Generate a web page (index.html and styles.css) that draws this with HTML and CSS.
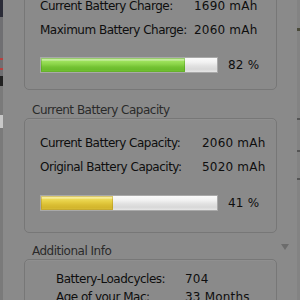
FILE: index.html
```html
<!DOCTYPE html>
<html>
<head>
<meta charset="utf-8">
<link rel="stylesheet" href="styles.css">
</head>
<body>
<div class="window">
  <div class="edge edge-left"></div>
  <div class="main">
    <div class="box box-charge">
      <div class="rows rows-charge">
        <span class="label">Current Battery Charge:</span><span class="value">1690 mAh</span>
        <span class="label">Maximum Battery Charge:</span><span class="value">2060 mAh</span>
      </div>
      <div class="meter meter-charge">
        <div class="bar"><div class="fill fill-green" style="width:82%"></div></div>
        <span class="pct">82 %</span>
      </div>
    </div>

    <div class="section"><span class="section-title">Current Battery Capacity</span></div>
    <div class="box box-capacity">
      <div class="rows rows-capacity">
        <span class="label">Current Battery Capacity:</span><span class="value">2060 mAh</span>
        <span class="label">Original Battery Capacity:</span><span class="value">5020 mAh</span>
      </div>
      <div class="meter meter-capacity">
        <div class="bar"><div class="fill fill-yellow" style="width:41%"></div></div>
        <span class="pct">41 %</span>
      </div>
    </div>

    <div class="section"><span class="section-title">Additional Info</span><span class="disclosure"></span></div>
    <div class="box box-info">
      <div class="rows rows-info">
        <span class="label">Battery-Loadcycles:</span><span class="value">704</span>
        <span class="label">Age of your Mac:</span><span class="value">33 Months</span>
      </div>
    </div>
  </div>
  <div class="edge edge-right"></div>
</div>
</body>
</html>
```

FILE: styles.css
```css
html, body {
  margin: 0;
  padding: 0;
  width: 300px;
  height: 300px;
  overflow: hidden;
  background: #8a8a8a;
}

.window {
  display: flex;
  width: 300px;
  height: 300px;
  font-family: "DejaVu Sans", sans-serif;
  font-size: 12px;
  line-height: 16px;
  color: #0e0e0e;
}

.edge {
  width: 3px;
  flex: none;
}

.edge-left {
  background: linear-gradient(to bottom,
    #2b2c38 0, #2b2c38 17px,
    #6f6f72 17px, #6f6f72 58px,
    #b84040 58px, #b84040 60px,
    #6f6f72 60px, #6f6f72 68px,
    #b84040 68px, #b84040 70px,
    #6f6f72 70px, #6f6f72 76px,
    #222 76px, #222 86px,
    #7a7a7a 86px, #7a7a7a 115px,
    #c8c8c8 115px, #c8c8c8 128px,
    #7a7a7a 128px);
}

.edge-right {
  background: linear-gradient(to bottom,
    #838383 0, #838383 28px,
    #4a4a3a 28px, #4a4a3a 31px,
    #838383 31px, #838383 118px,
    #555 118px, #555 120px,
    #838383 120px, #838383 150px,
    #555 150px, #555 152px,
    #838383 152px, #838383 178px,
    #555 178px, #555 180px,
    #838383 180px);
}

.main {
  flex: 1;
  padding-left: 21px;
  display: flex;
  flex-direction: column;
}

.box {
  width: 253px;
  box-sizing: border-box;
  border: 1px solid #777777;
  border-radius: 5px;
  box-shadow: inset 0 1px 0 rgba(255,255,255,0.05);
  padding-left: 15px;
}

.box-charge {
  margin-top: -19px;
  padding-top: 16px;
  padding-bottom: 16px;
}

.box-capacity {
  padding-top: 16px;
  padding-bottom: 21px;
}

.box-info {
  padding-top: 11px;
  padding-bottom: 20px;
  padding-left: 31px;
}

.rows {
  display: grid;
  row-gap: 8px;
}

.rows-charge { grid-template-columns: 154px auto; }
.rows-capacity { grid-template-columns: 162px auto; }
.rows-info { grid-template-columns: 129px auto; row-gap: 2px; }

.label {
  letter-spacing: -0.5px;
}

.value {
  letter-spacing: 0.2px;
}

.meter {
  display: flex;
  align-items: center;
  gap: 10px;
}

.meter-charge { margin-top: 19px; }
.meter-capacity { margin-top: 20px; }

.bar {
  width: 178px;
  height: 16px;
  box-sizing: border-box;
  border: 1px solid #a9a9a9;
  background: linear-gradient(to bottom, #fafafa 0, #f2f2f2 30%, #e2e2e2 55%, #d8d8d8 80%, #e6e6e6 100%);
  overflow: hidden;
}

.fill {
  height: 100%;
}

.fill-green {
  background: linear-gradient(to bottom, #c4ec9c 0, #c4ec9c 15%, #9be05a 25%, #8ad448 45%, #73c233 65%, #6abb2c 85%, #7fc83f 100%);
  box-shadow: inset 0 0 0 1px rgba(70,140,20,0.35);
}

.fill-yellow {
  background: linear-gradient(to bottom, #f6ec9a 0, #f6ec9a 15%, #ecd855 25%, #e3cb40 45%, #d9bd33 65%, #d2b52c 85%, #dcc344 100%);
  box-shadow: inset 0 0 0 1px rgba(160,130,20,0.35);
}

.pct {
  letter-spacing: 0.2px;
}

.section {
  display: flex;
  align-items: flex-start;
  height: 16px;
}

.box-charge + .section { margin-top: 12px; }
.box-capacity + .section { margin-top: 10px; }

.section-title {
  margin-left: 8px;
  color: #2a2a2a;
  letter-spacing: -0.5px;
}

.disclosure {
  margin-left: auto;
  margin-right: 8px;
  margin-top: 1px;
  width: 0;
  height: 0;
  border-left: 4px solid transparent;
  border-right: 4px solid transparent;
  border-top: 6px solid #6c6c6c;
}
```
